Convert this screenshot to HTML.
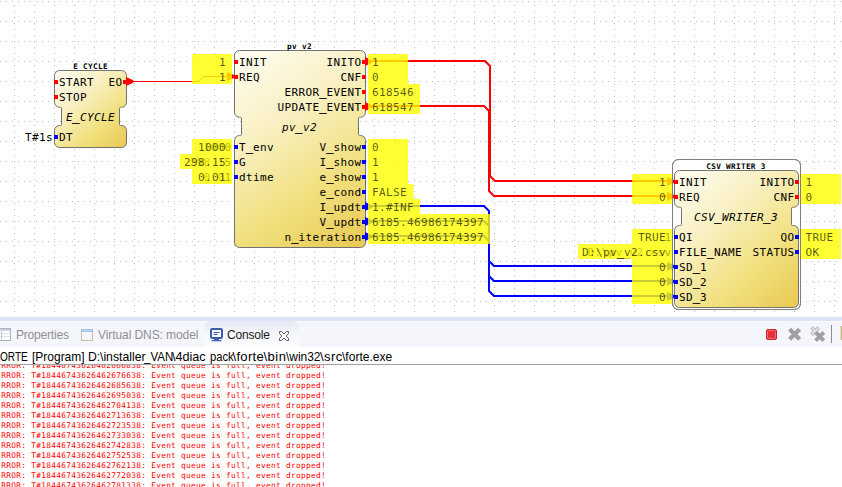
<!DOCTYPE html>
<html lang="en"><head><meta charset="utf-8"><title>4diac monitoring</title>
<style>
html,body{margin:0;padding:0;background:#fff;}
body{width:842px;height:487px;overflow:hidden;position:relative;font-family:"Liberation Sans", sans-serif;}
#canvas{position:absolute;left:0;top:0;width:842px;height:317px;overflow:hidden;background-color:#fff;
}
svg text{font-family:"DejaVu Sans Mono", "Liberation Mono", monospace;font-size:11px;letter-spacing:0.38px;fill:#000;}
svg text.i{font-style:italic;}
svg text.t{font-weight:bold;font-size:7.7px;letter-spacing:0.33px;}
svg text.s{font-family:"Liberation Sans", sans-serif;font-size:12px;letter-spacing:0;}
svg text.o{fill-opacity:0.66;}
svg text.g{fill-opacity:0.14;}
#band{position:absolute;left:0;top:317px;width:842px;height:4px;background:#dee3f5;}
#tabs{position:absolute;left:0;top:321px;width:842px;height:26px;background:linear-gradient(#fafbfe 0,#fafbfe 1px,#f5f6fc 1px,#f5f6fc 100%);}
#seltab{position:absolute;left:204px;top:0px;width:95px;height:26px;background:linear-gradient(#e3e8f4,#f4f6fb 45%,#fcfcfe);border-radius:7px 7px 0 0;}
.tab{position:absolute;top:7px;font-size:12px;line-height:14px;color:#909096;white-space:nowrap;letter-spacing:-0.2px;}
#desc{position:absolute;left:0;top:347px;width:842px;height:17px;background:#fff;font-size:13px;line-height:17px;color:#000;white-space:nowrap;overflow:hidden;}
#desc span{position:absolute;top:1px;transform-origin:0 0;white-space:pre;}
#line{position:absolute;left:0;top:364px;width:842px;height:1px;background:#a0a0a0;}
#con{position:absolute;left:0;top:365px;width:842px;height:122px;overflow:hidden;background:#fff;}
.cl{font-family:"DejaVu Sans Mono", "Liberation Mono", monospace;font-size:7.8px;letter-spacing:0.304px;line-height:10px;height:10px;color:#ff0000;white-space:pre;}
</style></head><body>
<div id="canvas">
<svg width="842" height="317" viewBox="0 0 842 317" style="position:absolute;left:0;top:0">
<defs><pattern id="gh" width="6" height="20" patternUnits="userSpaceOnUse"><rect x="0" y="1" width="1" height="1" fill="#bdbdbd"/></pattern><pattern id="gv" width="20" height="6" patternUnits="userSpaceOnUse"><rect x="14" y="5" width="1" height="1" fill="#bdbdbd"/></pattern><pattern id="gh2" width="6" height="20" patternUnits="userSpaceOnUse"><rect x="2" y="1" width="1" height="1" fill="#bdbdbd"/></pattern><pattern id="gv2" width="20" height="6" patternUnits="userSpaceOnUse"><rect x="14" y="0" width="1" height="1" fill="#bdbdbd"/></pattern></defs>
<rect x="0" y="0" width="842" height="317" fill="url(#gh)"/><rect x="0" y="0" width="842" height="317" fill="url(#gv)"/>
<rect x="500" y="54" width="342" height="250" fill="#ffffff"/><rect x="500" y="54" width="342" height="250" fill="url(#gh2)"/><rect x="500" y="54" width="342" height="250" fill="url(#gv2)"/>
<linearGradient id="g1" gradientUnits="userSpaceOnUse" x1="54.5" y1="70.5" x2="126.5" y2="147.5"><stop offset="0" stop-color="#fffdf3"/><stop offset="0.35" stop-color="#f9f0c3"/><stop offset="0.69" stop-color="#f1e07d"/><stop offset="1" stop-color="#e9c852"/></linearGradient>
<path d="M59.5,70.5 H121.5 A5,5 0 0 1 126.5,75.5 V102.3 A5,5 0 0 1 121.5,107.3 H120.5 Q119.5,107.3 119.5,108.3 V124.5 Q119.5,125.5 120.5,125.5 H121.5 A5,5 0 0 1 126.5,130.5 V142.5 A5,5 0 0 1 121.5,147.5 H59.5 A5,5 0 0 1 54.5,142.5 V130.5 A5,5 0 0 1 59.5,125.5 H60.5 Q61.5,125.5 61.5,124.5 V108.3 Q61.5,107.3 60.5,107.3 H59.5 A5,5 0 0 1 54.5,102.3 V75.5 A5,5 0 0 1 59.5,70.5 Z" fill="url(#g1)" stroke="#727272" stroke-width="1"/>
<linearGradient id="g2" gradientUnits="userSpaceOnUse" x1="234.5" y1="50.5" x2="365.5" y2="247.5"><stop offset="0" stop-color="#fffdf3"/><stop offset="0.35" stop-color="#f9f0c3"/><stop offset="0.69" stop-color="#f1e07d"/><stop offset="1" stop-color="#e9c852"/></linearGradient>
<path d="M239.5,50.5 H360.5 A5,5 0 0 1 365.5,55.5 V112.3 A5,5 0 0 1 360.5,117.3 H359.5 Q358.5,117.3 358.5,118.3 V134.5 Q358.5,135.5 359.5,135.5 H360.5 A5,5 0 0 1 365.5,140.5 V242.5 A5,5 0 0 1 360.5,247.5 H239.5 A5,5 0 0 1 234.5,242.5 V140.5 A5,5 0 0 1 239.5,135.5 H240.5 Q241.5,135.5 241.5,134.5 V118.3 Q241.5,117.3 240.5,117.3 H239.5 A5,5 0 0 1 234.5,112.3 V55.5 A5,5 0 0 1 239.5,50.5 Z" fill="url(#g2)" stroke="#727272" stroke-width="1"/>
<rect x="672.5" y="159.5" width="128" height="150" rx="6" ry="6" fill="#ffffff" stroke="#7f7f7f" stroke-width="1"/>
<linearGradient id="g3" gradientUnits="userSpaceOnUse" x1="674.5" y1="170.5" x2="798.5" y2="307.5"><stop offset="0" stop-color="#fffdf3"/><stop offset="0.35" stop-color="#f9f0c3"/><stop offset="0.69" stop-color="#f1e07d"/><stop offset="1" stop-color="#e9c852"/></linearGradient>
<path d="M679.5,170.5 H793.5 A5,5 0 0 1 798.5,175.5 V202.3 A5,5 0 0 1 793.5,207.3 H792.5 Q791.5,207.3 791.5,208.3 V224.5 Q791.5,225.5 792.5,225.5 H793.5 A5,5 0 0 1 798.5,230.5 V302.5 A5,5 0 0 1 793.5,307.5 H679.5 A5,5 0 0 1 674.5,302.5 V230.5 A5,5 0 0 1 679.5,225.5 H680.5 Q681.5,225.5 681.5,224.5 V208.3 Q681.5,207.3 680.5,207.3 H679.5 A5,5 0 0 1 674.5,202.3 V175.5 A5,5 0 0 1 679.5,170.5 Z" fill="url(#g3)" stroke="#727272" stroke-width="1"/>
<text class="t" x="90.5" y="69" text-anchor="middle" >E CYCLE</text>
<text class="t" x="299.5" y="49" text-anchor="middle" >pv v2</text>
<text class="t" x="736" y="169" text-anchor="middle" >CSV WRITER 3</text>
<rect x="54" y="80" width="4" height="4" fill="#ff0000"/>
<text class="m" x="59" y="86" text-anchor="start" >START</text>
<rect x="54" y="95" width="4" height="4" fill="#ff0000"/>
<text class="m" x="59" y="101" text-anchor="start" >STOP</text>
<rect x="123" y="80" width="4" height="4" fill="#ff0000"/>
<text class="m" x="122.5" y="86" text-anchor="end" >EO</text>
<text class="m i" x="90.5" y="121" text-anchor="middle" >E_CYCLE</text>
<rect x="71.9" y="123" width="7.6" height="1" fill="#000" fill-opacity="0.8"/>
<rect x="54" y="135" width="4" height="4" fill="#0000ff"/>
<text class="m" x="59" y="141" text-anchor="start" >DT</text>
<text class="m" x="53" y="141" text-anchor="end" >T#1s</text>
<rect x="234" y="60" width="4" height="4" fill="#ff0000"/>
<text class="m" x="239" y="66" text-anchor="start" >INIT</text>
<rect x="234" y="75" width="4" height="4" fill="#ff0000"/>
<text class="m" x="239" y="81" text-anchor="start" >REQ</text>
<rect x="234" y="145" width="4" height="4" fill="#0000ff"/>
<text class="m" x="239" y="151" text-anchor="start" >T_env</text>
<rect x="245.7" y="153" width="7.6" height="1" fill="#000" fill-opacity="0.8"/>
<rect x="234" y="160" width="4" height="4" fill="#0000ff"/>
<text class="m" x="239" y="166" text-anchor="start" >G</text>
<rect x="234" y="175" width="4" height="4" fill="#0000ff"/>
<text class="m" x="239" y="181" text-anchor="start" >dtime</text>
<rect x="362" y="60" width="4" height="4" fill="#ff0000"/>
<text class="m" x="361.5" y="66" text-anchor="end" >INITO</text>
<rect x="362" y="75" width="4" height="4" fill="#ff0000"/>
<text class="m" x="361.5" y="81" text-anchor="end" >CNF</text>
<rect x="362" y="90" width="4" height="4" fill="#ff0000"/>
<text class="m" x="361.5" y="96" text-anchor="end" >ERROR_EVENT</text>
<rect x="319.2" y="98" width="7.6" height="1" fill="#000" fill-opacity="0.8"/>
<rect x="362" y="105" width="4" height="4" fill="#ff0000"/>
<text class="m" x="361.5" y="111" text-anchor="end" >UPDATE_EVENT</text>
<rect x="319.2" y="113" width="7.6" height="1" fill="#000" fill-opacity="0.8"/>
<rect x="362" y="145" width="4" height="4" fill="#0000ff"/>
<text class="m" x="361.5" y="151" text-anchor="end" >V_show</text>
<rect x="326.2" y="153" width="7.6" height="1" fill="#000" fill-opacity="0.8"/>
<rect x="362" y="160" width="4" height="4" fill="#0000ff"/>
<text class="m" x="361.5" y="166" text-anchor="end" >I_show</text>
<rect x="326.2" y="168" width="7.6" height="1" fill="#000" fill-opacity="0.8"/>
<rect x="362" y="175" width="4" height="4" fill="#0000ff"/>
<text class="m" x="361.5" y="181" text-anchor="end" >e_show</text>
<rect x="326.2" y="183" width="7.6" height="1" fill="#000" fill-opacity="0.8"/>
<rect x="362" y="190" width="4" height="4" fill="#0000ff"/>
<text class="m" x="361.5" y="196" text-anchor="end" >e_cond</text>
<rect x="326.2" y="198" width="7.6" height="1" fill="#000" fill-opacity="0.8"/>
<rect x="362" y="205" width="4" height="4" fill="#0000ff"/>
<text class="m" x="361.5" y="211" text-anchor="end" >I_updt</text>
<rect x="326.2" y="213" width="7.6" height="1" fill="#000" fill-opacity="0.8"/>
<rect x="362" y="220" width="4" height="4" fill="#0000ff"/>
<text class="m" x="361.5" y="226" text-anchor="end" >V_updt</text>
<rect x="326.2" y="228" width="7.6" height="1" fill="#000" fill-opacity="0.8"/>
<rect x="362" y="235" width="4" height="4" fill="#0000ff"/>
<text class="m" x="361.5" y="241" text-anchor="end" >n_iteration</text>
<rect x="291.2" y="243" width="7.6" height="1" fill="#000" fill-opacity="0.8"/>
<text class="m i" x="299.5" y="131" text-anchor="middle" >pv_v2</text>
<rect x="294.9" y="133" width="7.6" height="1" fill="#000" fill-opacity="0.8"/>
<rect x="674" y="180" width="4" height="4" fill="#ff0000"/>
<text class="m" x="679" y="186" text-anchor="start" >INIT</text>
<rect x="674" y="195" width="4" height="4" fill="#ff0000"/>
<text class="m" x="679" y="201" text-anchor="start" >REQ</text>
<rect x="674" y="235" width="4" height="4" fill="#0000ff"/>
<text class="m" x="679" y="241" text-anchor="start" >QI</text>
<rect x="674" y="250" width="4" height="4" fill="#0000ff"/>
<text class="m" x="679" y="256" text-anchor="start" >FILE_NAME</text>
<rect x="706.7" y="258" width="7.6" height="1" fill="#000" fill-opacity="0.8"/>
<rect x="674" y="265" width="4" height="4" fill="#0000ff"/>
<text class="m" x="679" y="271" text-anchor="start" >SD_1</text>
<rect x="692.7" y="273" width="7.6" height="1" fill="#000" fill-opacity="0.8"/>
<rect x="674" y="280" width="4" height="4" fill="#0000ff"/>
<text class="m" x="679" y="286" text-anchor="start" >SD_2</text>
<rect x="692.7" y="288" width="7.6" height="1" fill="#000" fill-opacity="0.8"/>
<rect x="674" y="295" width="4" height="4" fill="#0000ff"/>
<text class="m" x="679" y="301" text-anchor="start" >SD_3</text>
<rect x="692.7" y="303" width="7.6" height="1" fill="#000" fill-opacity="0.8"/>
<rect x="795" y="180" width="4" height="4" fill="#ff0000"/>
<text class="m" x="794.5" y="186" text-anchor="end" >INITO</text>
<rect x="795" y="195" width="4" height="4" fill="#ff0000"/>
<text class="m" x="794.5" y="201" text-anchor="end" >CNF</text>
<rect x="795" y="235" width="4" height="4" fill="#0000ff"/>
<text class="m" x="794.5" y="241" text-anchor="end" >QO</text>
<rect x="795" y="250" width="4" height="4" fill="#0000ff"/>
<text class="m" x="794.5" y="256" text-anchor="end" >STATUS</text>
<text class="m i" x="736" y="221" text-anchor="middle" >CSV_WRITER_3</text>
<rect x="713.9" y="223" width="7.6" height="1" fill="#000" fill-opacity="0.8"/>
<rect x="762.9" y="223" width="7.6" height="1" fill="#000" fill-opacity="0.8"/>
<text class="m" x="231.6" y="151" text-anchor="end" >1000</text>
<text class="m" x="231.6" y="166" text-anchor="end" >298.15</text>
<text class="m" x="231.6" y="181" text-anchor="end" >0.01</text>
<text class="m" x="671.6" y="241" text-anchor="end" >1</text>
<text class="m" x="671.6" y="256" text-anchor="end" >D:\pv_v2.csv</text>
<rect x="622.3" y="258" width="7.6" height="1" fill="#000" fill-opacity="0.8"/>
<path d="M126,81.5 H198.5 L203.5,76.5 H234" fill="none" stroke="#ff0000" stroke-width="1"/>
<path d="M126,76.9 L133.3,80.3 L133.3,82.7 L126,86.1 Z" fill="#ff0000"/>
<path d="M227,72.0 L234.5,75.3 L234.5,77.7 L227,81.0 Z" fill="#ff0000"/>
<path d="M366,61 L485,61 L490,66 L490,176 L495,181 L673,181" fill="none" stroke="#ff0000" stroke-width="2" stroke-linejoin="round"/>
<path d="M365,56.9 L372.3,60.3 L372.3,62.7 L365,66.1 Z" fill="#ff0000"/>
<path d="M667,177.0 L674.5,180.3 L674.5,182.7 L667,186.0 Z" fill="#ff0000"/>
<path d="M366,106 L484,106 L489,111 L489,191 L494,196 L673,196" fill="none" stroke="#ff0000" stroke-width="2" stroke-linejoin="round"/>
<path d="M365,101.9 L372.3,105.3 L372.3,107.7 L365,111.1 Z" fill="#ff0000"/>
<path d="M667,192.0 L674.5,195.3 L674.5,197.7 L667,201.0 Z" fill="#ff0000"/>
<path d="M366,206 L484,206 L489,211 L489,261 L494,266 L673,266" fill="none" stroke="#0000ff" stroke-width="2" stroke-linejoin="round"/>
<path d="M365,201.9 L372.3,205.3 L372.3,207.7 L365,211.1 Z" fill="#0000ff"/>
<path d="M667,262.0 L674.5,265.3 L674.5,267.7 L667,271.0 Z" fill="#0000ff"/>
<path d="M366,221 L484,221 L489,226 L489,276 L494,281 L673,281" fill="none" stroke="#0000ff" stroke-width="2" stroke-linejoin="round"/>
<path d="M365,216.9 L372.3,220.3 L372.3,222.7 L365,226.1 Z" fill="#0000ff"/>
<path d="M667,277.0 L674.5,280.3 L674.5,282.7 L667,286.0 Z" fill="#0000ff"/>
<path d="M366,236 L484,236 L489,241 L489,291 L494,296 L673,296" fill="none" stroke="#0000ff" stroke-width="2" stroke-linejoin="round"/>
<path d="M365,231.9 L372.3,235.3 L372.3,237.7 L365,241.1 Z" fill="#0000ff"/>
<path d="M667,292.0 L674.5,295.3 L674.5,297.7 L667,301.0 Z" fill="#0000ff"/>
<rect x="672.5" y="159.5" width="128" height="150" rx="6" ry="6" fill="none" stroke="#7f7f7f" stroke-width="1"/>
<rect x="192" y="54" width="40" height="30" fill="#ffff00" fill-opacity="0.8"/>
<text class="m o" x="226" y="66" text-anchor="end" >1</text>
<text class="m o" x="226" y="81" text-anchor="end" >1</text>
<rect x="192" y="139" width="40" height="15" fill="#ffff00" fill-opacity="0.8"/>
<text class="m o" x="226" y="151" text-anchor="end" >1000</text>
<rect x="180" y="154" width="52" height="15" fill="#ffff00" fill-opacity="0.8"/>
<text class="m o" x="226" y="166" text-anchor="end" >298.15</text>
<rect x="192" y="169" width="40" height="15" fill="#ffff00" fill-opacity="0.8"/>
<text class="m o" x="226" y="181" text-anchor="end" >0.01</text>
<rect x="368" y="54" width="40" height="30" fill="#ffff00" fill-opacity="0.8"/>
<text class="m o" x="372" y="66" text-anchor="start" >1</text>
<text class="m o" x="372" y="81" text-anchor="start" >0</text>
<rect x="368" y="84" width="52" height="30" fill="#ffff00" fill-opacity="0.8"/>
<text class="m o" x="372" y="96" text-anchor="start" >618546</text>
<text class="m o" x="372" y="111" text-anchor="start" >618547</text>
<rect x="368" y="139" width="40" height="45" fill="#ffff00" fill-opacity="0.8"/>
<text class="m o" x="372" y="151" text-anchor="start" >0</text>
<text class="m o" x="372" y="166" text-anchor="start" >1</text>
<text class="m o" x="372" y="181" text-anchor="start" >1</text>
<rect x="368" y="184" width="45.5" height="15" fill="#ffff00" fill-opacity="0.8"/>
<text class="m o" x="372" y="196" text-anchor="start" >FALSE</text>
<rect x="368" y="199" width="52" height="15" fill="#ffff00" fill-opacity="0.8"/>
<text class="m o" x="372" y="211" text-anchor="start" >1.#INF</text>
<rect x="368" y="214" width="122" height="30" fill="#ffff00" fill-opacity="0.8"/>
<text class="m o" x="372" y="226" text-anchor="start" >6185.46986174397</text>
<text class="m o" x="372" y="241" text-anchor="start" >6185.46986174397</text>
<rect x="632" y="174" width="40" height="30" fill="#ffff00" fill-opacity="0.8"/>
<text class="m o" x="666" y="186" text-anchor="end" >1</text>
<text class="m o" x="666" y="201" text-anchor="end" >0</text>
<rect x="632" y="229" width="40" height="15" fill="#ffff00" fill-opacity="0.8"/>
<text class="m o" x="666" y="241" text-anchor="end" >TRUE</text>
<rect x="578" y="244" width="94" height="15" fill="#ffff00" fill-opacity="0.8"/>
<text class="m o" x="666" y="256" text-anchor="end" >D:\pv_v2.csv</text>
<rect x="616.7" y="258" width="7.6" height="1" fill="#000" fill-opacity="0.6"/>
<rect x="632" y="259" width="40" height="45" fill="#ffff00" fill-opacity="0.8"/>
<text class="m o" x="666" y="271" text-anchor="end" >0</text>
<text class="m o" x="666" y="286" text-anchor="end" >0</text>
<text class="m o" x="666" y="301" text-anchor="end" >0</text>
<rect x="801" y="174" width="40" height="30" fill="#ffff00" fill-opacity="0.8"/>
<text class="m o" x="805.5" y="186" text-anchor="start" >1</text>
<text class="m o" x="805.5" y="201" text-anchor="start" >0</text>
<rect x="801" y="229" width="40" height="30" fill="#ffff00" fill-opacity="0.8"/>
<text class="m o" x="805.5" y="241" text-anchor="start" >TRUE</text>
<text class="m o" x="805.5" y="256" text-anchor="start" >OK</text>
<text class="m g" x="231.6" y="151" text-anchor="end" >0</text>
<text class="m g" x="231.6" y="166" text-anchor="end" >5</text>
<text class="m g" x="231.6" y="181" text-anchor="end" >1</text>
<text class="m g" x="671.6" y="241" text-anchor="end" >1</text>
<text class="m g" x="671.6" y="256" text-anchor="end" >v</text>
</svg>
</div>
<div id="band"></div>
<div id="tabs">
 <div id="seltab"></div>
 <svg width="842" height="26" viewBox="0 0 842 26" style="position:absolute;left:0;top:0">
  <!-- properties icon -->
  <g><rect x="-2.5" y="7.5" width="13" height="12" fill="#ffffff" stroke="#a7b0c4"/><rect x="-2" y="8" width="12" height="2" fill="#cdd3df"/><path d="M-2,12.5H10 M-2,15.5H10" fill="none" stroke="#dde1e9"/><path d="M1.5,10V19" fill="none" stroke="#c3c9d6"/></g>
  <!-- virtual dns icon -->
  <g><rect x="81.5" y="8.5" width="11" height="11" fill="#f2f8fd" stroke="#c9baa0"/><rect x="81" y="8" width="12" height="3" fill="#9fbfe3"/><rect x="82" y="9" width="10" height="1" fill="#c4daf0"/></g>
  <!-- console icon -->
  <g><rect x="211" y="8" width="11" height="9" rx="1.2" fill="#f4f7fd" stroke="#3a5ca8" stroke-width="2"/><path d="M213.5,11.5h6 M213.5,13.5h4" stroke="#3a5ca8" stroke-width="1"/><rect x="214" y="17.6" width="5" height="1.6" fill="#3a5ca8"/><rect x="211.5" y="19" width="10" height="1.3" fill="#4a6cb8"/></g>
  <!-- close x -->
  <path d="M279.5,10.5 l2,0 l2.5,2.5 l2.5,-2.5 l2,0 l0,2 l-2.5,2.5 l2.5,2.5 l0,2 l-2,0 l-2.5,-2.5 l-2.5,2.5 l-2,0 l0,-2 l2.5,-2.5 l-2.5,-2.5 z" fill="#fff" stroke="#4a4a4a" stroke-width="0.9"/>
  <!-- stop -->
  <rect x="766.5" y="8.5" width="10" height="10" rx="1.5" fill="#e8303a" stroke="#c8202c"/>
  <rect x="767.5" y="9.5" width="8" height="8" rx="1" fill="none" stroke="#f47078" stroke-width="1"/>
  <!-- X -->
  <path d="M789.6,8.2 L799.6,18.2 M799.6,8.2 L789.6,18.2" stroke="#a0a0a0" stroke-width="4.2" stroke-linecap="butt"/>
  <!-- XX -->
  <path d="M811.6,6.6 L818.8,13.8 M818.8,6.6 L811.6,13.8" stroke="#b4b4b4" stroke-width="3.6" stroke-linecap="butt"/>
  <path d="M811.9,6.9 L818.5,13.5 M818.5,6.9 L811.9,13.5" stroke="#e2e2e2" stroke-width="1.8" stroke-linecap="butt"/>
  <path d="M815.6,11.4 L823.8,19.6 M823.8,11.4 L815.6,19.6" stroke="#a0a0a0" stroke-width="4" stroke-linecap="butt"/>
  <rect x="831" y="4" width="1" height="18" fill="#8c8c8c"/>
  <rect x="840.6" y="5" width="2" height="14" fill="#c8b878"/>
 </svg>
 <div class="tab" style="left:16px">Properties</div>
 <div class="tab" style="left:98px;letter-spacing:-0.08px">Virtual DNS: model</div>
 <div class="tab" style="left:227px;color:#1a1a1a">Console</div>
</div>
<div id="desc"><span style="left:0.15px;transform:scaleX(0.7732)">ORTE</span> <span style="left:31.50px;transform:scaleX(0.9215)">[Program]</span> <span style="left:88.30px;transform:scaleX(0.9385)">D:</span><span style="left:99.50px;transform:scaleX(0.9397)">\installer</span><span style="left:144.00px;transform:scaleX(0.8848)">_VAN</span><span style="left:172.20px;transform:scaleX(0.9682)">\4diac</span> <span style="left:209.60px;transform:scaleX(0.8592)">pack</span><span style="left:232.50px;letter-spacing:0.312px">\forte</span><span style="left:263.40px;letter-spacing:0.558px">\bin</span><span style="left:286.20px;transform:scaleX(0.9181)">\win32</span><span style="left:319.90px;letter-spacing:0.462px">\src</span><span style="left:342.00px;transform:scaleX(0.9261)">\forte.exe</span></div>
<div id="line"></div>
<div id="con"><div style="position:absolute;left:1.2px;top:-4px">
<div class="cl">RROR: T#18446743626462666838: Event queue is full, event dropped!</div>
<div class="cl">RROR: T#18446743626462676638: Event queue is full, event dropped!</div>
<div class="cl">RROR: T#18446743626462685638: Event queue is full, event dropped!</div>
<div class="cl">RROR: T#18446743626462695038: Event queue is full, event dropped!</div>
<div class="cl">RROR: T#18446743626462704138: Event queue is full, event dropped!</div>
<div class="cl">RROR: T#18446743626462713638: Event queue is full, event dropped!</div>
<div class="cl">RROR: T#18446743626462723538: Event queue is full, event dropped!</div>
<div class="cl">RROR: T#18446743626462733038: Event queue is full, event dropped!</div>
<div class="cl">RROR: T#18446743626462742838: Event queue is full, event dropped!</div>
<div class="cl">RROR: T#18446743626462752538: Event queue is full, event dropped!</div>
<div class="cl">RROR: T#18446743626462762138: Event queue is full, event dropped!</div>
<div class="cl">RROR: T#18446743626462772038: Event queue is full, event dropped!</div>
<div class="cl">RROR: T#18446743626462781338: Event queue is full, event dropped!</div>
</div></div>
</body></html>
